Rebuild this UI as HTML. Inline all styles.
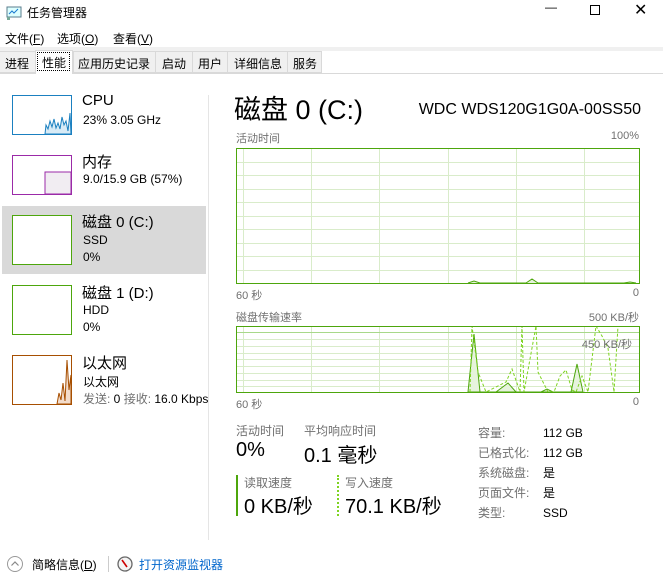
<!DOCTYPE html>
<html><head><meta charset="utf-8"><style>
*{margin:0;padding:0;box-sizing:border-box}
body{width:663px;height:588px;background:#fff;font-family:"Liberation Sans","Noto Sans CJK SC",sans-serif;position:relative;overflow:hidden;color:#000}
.a{position:absolute;white-space:nowrap}
.g{color:#707070}
</style></head><body>
<svg class="a" style="left:6px;top:6px" width="16" height="14"><rect x="1" y="1" width="14" height="10" fill="#dff" stroke="#5a7c8c"/><polyline points="3,8 6,5 8,7 12,3" fill="none" stroke="#1a7ad0"/><rect x="1" y="11" width="3" height="3" fill="#7a9"/></svg>
<div class="a" style="left:27px;top:4px;font-size:12px">任务管理器</div>
<div class="a" style="left:545px;top:0px;font-size:12px">&#8212;</div>
<div class="a" style="left:590px;top:5px;width:10px;height:10px;border:1px solid #000"></div>
<div class="a" style="left:634px;top:0px;font-size:16px;font-weight:300">✕</div>
<div class="a" style="left:5px;top:30px;font-size:12px">文件(<u>F</u>)</div>
<div class="a" style="left:57px;top:30px;font-size:12px">选项(<u>O</u>)</div>
<div class="a" style="left:113px;top:30px;font-size:12px">查看(<u>V</u>)</div>
<div class="a" style="left:0;top:47px;width:663px;height:4px;background:#f0f0f0"></div>
<div class="a" style="left:0;top:51px;width:322px;height:22px;background:#f0f0f0;border:1px solid #d9d9d9;border-left:0"></div>
<div class="a" style="left:0;top:73px;width:663px;height:1px;background:#d9d9d9"></div>
<div class="a" style="left:5px;top:55px;font-size:12px">进程</div>
<div class="a" style="left:35px;top:50px;width:38px;height:24px;background:#fff;border:1px solid #d9d9d9;border-bottom:0"></div>
<div class="a" style="left:37px;top:52px;width:33px;height:19px;border:1px dotted #000"></div>
<div class="a" style="left:42px;top:54px;font-size:12px">性能</div>
<div class="a" style="left:73px;top:51px;width:1px;height:22px;background:#d9d9d9"></div>
<div class="a" style="left:78px;top:55px;font-size:12px">应用历史记录</div>
<div class="a" style="left:155px;top:51px;width:1px;height:22px;background:#d9d9d9"></div>
<div class="a" style="left:162px;top:55px;font-size:12px">启动</div>
<div class="a" style="left:192px;top:51px;width:1px;height:22px;background:#d9d9d9"></div>
<div class="a" style="left:198px;top:55px;font-size:12px">用户</div>
<div class="a" style="left:227px;top:51px;width:1px;height:22px;background:#d9d9d9"></div>
<div class="a" style="left:234px;top:55px;font-size:12px">详细信息</div>
<div class="a" style="left:287px;top:51px;width:1px;height:22px;background:#d9d9d9"></div>
<div class="a" style="left:293px;top:55px;font-size:12px">服务</div>
<div class="a" style="left:208px;top:95px;width:1px;height:445px;background:#e5e5e5"></div>
<div class="a" style="left:2px;top:206px;width:204px;height:68px;background:#d9d9d9"></div>
<svg class="a" style="left:12px;top:95px" width="60" height="40"><rect x="0.5" y="0.5" width="59" height="39" fill="#fff" stroke="#1b80c0"/><polygon points="33,39 34,30 36,34 38,26 40,32 42,24 44,33 46,28 48,34 50,22 52,30 54,26 56,36 58,18 59,39" fill="#d8ebf6" stroke="#1b80c0" stroke-width="1"/></svg>
<div class="a" style="left:82px;top:92px;font-size:15px">CPU</div>
<div class="a" style="left:83px;top:113px;font-size:12px">23% 3.05 GHz</div>
<svg class="a" style="left:12px;top:155px" width="60" height="40"><rect x="0.5" y="0.5" width="59" height="39" fill="#fff" stroke="#9b2aa8"/><rect x="33" y="17" width="26" height="22" fill="#f1edf2" stroke="#9b2aa8"/></svg>
<div class="a" style="left:82px;top:151px;font-size:15px">内存</div>
<div class="a" style="left:83px;top:172px;font-size:12px">9.0/15.9 GB (57%)</div>
<div class="a" style="left:12px;top:215px;width:60px;height:50px;background:#fff;border:1px solid #4da60c"></div>
<div class="a" style="left:82px;top:211px;font-size:15px">磁盘 0 (C:)</div>
<div class="a" style="left:83px;top:233px;font-size:12px">SSD</div>
<div class="a" style="left:83px;top:250px;font-size:12px">0%</div>
<div class="a" style="left:12px;top:285px;width:60px;height:50px;background:#fff;border:1px solid #4da60c"></div>
<div class="a" style="left:82px;top:282px;font-size:15px">磁盘 1 (D:)</div>
<div class="a" style="left:83px;top:303px;font-size:12px">HDD</div>
<div class="a" style="left:83px;top:320px;font-size:12px">0%</div>
<svg class="a" style="left:12px;top:355px" width="60" height="50"><rect x="0.5" y="0.5" width="59" height="49" fill="#fff" stroke="#a74f01"/><polygon points="45,49 47,38 49,45 51,28 53,46 55,5 57,35 59,20 59,49" fill="#f3dccb" stroke="#a74f01"/></svg>
<div class="a" style="left:82px;top:352px;font-size:15px">以太网</div>
<div class="a" style="left:83px;top:373px;font-size:12px">以太网</div>
<div class="a" style="left:83px;top:390px;font-size:12px;width:125px;overflow:hidden"><span class="g">发送:</span> 0 <span class="g">接收:</span> 16.0 Kbps</div>
<div class="a" style="left:234px;top:88px;font-size:27px">磁盘 0 (C:)</div>
<div class="a" style="right:22px;top:101px;font-size:16px">WDC WDS120G1G0A-00SS50</div>
<div class="a g" style="left:236px;top:130px;font-size:11px">活动时间</div>
<div class="a g" style="right:24px;top:130px;font-size:11px">100%</div>
<svg class="a" style="left:236px;top:148px" width="404" height="136">
<g stroke="#d9ecca" stroke-width="1">
<line x1="7.5" y1="0" x2="7.5" y2="136"/><line x1="75.5" y1="0" x2="75.5" y2="136"/><line x1="143.5" y1="0" x2="143.5" y2="136"/><line x1="212.5" y1="0" x2="212.5" y2="136"/><line x1="280.5" y1="0" x2="280.5" y2="136"/><line x1="348.5" y1="0" x2="348.5" y2="136"/>
<line x1="0" y1="14.5" x2="404" y2="14.5"/><line x1="0" y1="27.5" x2="404" y2="27.5"/><line x1="0" y1="41.5" x2="404" y2="41.5"/><line x1="0" y1="54.5" x2="404" y2="54.5"/><line x1="0" y1="68.5" x2="404" y2="68.5"/><line x1="0" y1="81.5" x2="404" y2="81.5"/><line x1="0" y1="95.5" x2="404" y2="95.5"/><line x1="0" y1="108.5" x2="404" y2="108.5"/><line x1="0" y1="122.5" x2="404" y2="122.5"/>
</g>
<polyline points="232,135 238,133 244,135 290,135 296,131 302,135 388,135 394,134 400,135" fill="#e6f3dc" stroke="#4da60c"/>
<rect x="0.5" y="0.5" width="403" height="135" fill="none" stroke="#4da60c"/>
</svg>
<div class="a g" style="left:236px;top:287px;font-size:11px">60 秒</div>
<div class="a g" style="right:24px;top:287px;font-size:11px">0</div>
<div class="a g" style="left:236px;top:309px;font-size:11px">磁盘传输速率</div>
<div class="a g" style="right:24px;top:309px;font-size:11px">500 KB/秒</div>
<svg class="a" style="left:236px;top:326px" width="404" height="67">
<g stroke="#d9ecca" stroke-width="1">
<line x1="7.5" y1="0" x2="7.5" y2="67"/><line x1="75.5" y1="0" x2="75.5" y2="67"/><line x1="143.5" y1="0" x2="143.5" y2="67"/><line x1="212.5" y1="0" x2="212.5" y2="67"/><line x1="280.5" y1="0" x2="280.5" y2="67"/><line x1="348.5" y1="0" x2="348.5" y2="67"/>
<line x1="0" y1="13.5" x2="404" y2="13.5"/><line x1="0" y1="20.5" x2="404" y2="20.5"/><line x1="0" y1="27.5" x2="404" y2="27.5"/><line x1="0" y1="33.5" x2="404" y2="33.5"/><line x1="0" y1="40.5" x2="404" y2="40.5"/><line x1="0" y1="47.5" x2="404" y2="47.5"/><line x1="0" y1="54.5" x2="404" y2="54.5"/><line x1="0" y1="60.5" x2="404" y2="60.5"/>
</g>
<line x1="0" y1="6.5" x2="404" y2="6.5" stroke="#a8d88a"/>
<polygon points="232,66 238,8 244,66 260,66 272,57 280,66 305,66 311,63 317,66 335,66 341,38 347,66" fill="#e6f3dc" stroke="#4da60c"/>
<polyline points="234,66 236,0 242,46 250,66 270,56 276,43 282,60 284,66 286,0 288,66 300,0 302,46 312,66 318,66 324,50 330,44 336,64 340,66 346,50 352,66 360,0 366,10 372,22 378,66 382,0" fill="none" stroke="#7ed321" stroke-dasharray="3,2"/>
<rect x="0.5" y="0.5" width="403" height="66" fill="none" stroke="#4da60c"/>
</svg>
<div class="a g" style="right:31px;top:336px;font-size:11px">450 KB/秒</div>
<div class="a g" style="left:236px;top:396px;font-size:11px">60 秒</div>
<div class="a g" style="right:24px;top:396px;font-size:11px">0</div>
<div class="a g" style="left:236px;top:422px;font-size:12px">活动时间</div>
<div class="a" style="left:236px;top:439px;font-size:20px">0%</div>
<div class="a g" style="left:304px;top:422px;font-size:12px">平均响应时间</div>
<div class="a" style="left:304px;top:439px;font-size:20px">0.1 毫秒</div>
<div class="a" style="left:236px;top:475px;width:2px;height:41px;background:#4da60c"></div>
<div class="a g" style="left:244px;top:474px;font-size:12px">读取速度</div>
<div class="a" style="left:244px;top:490px;font-size:20px">0 KB/秒</div>
<div class="a" style="left:337px;top:475px;width:0;height:41px;border-left:2px dotted #7ed321"></div>
<div class="a g" style="left:345px;top:474px;font-size:12px">写入速度</div>
<div class="a" style="left:345px;top:490px;font-size:20px">70.1 KB/秒</div>
<div class="a g" style="left:478px;top:423px;font-size:12px;line-height:20px">容量:<br>已格式化:<br>系统磁盘:<br>页面文件:<br>类型:</div>
<div class="a" style="left:543px;top:423px;font-size:12px;line-height:20px">112 GB<br>112 GB<br>是<br>是<br>SSD</div>
<div class="a" style="left:7px;top:556px;width:16px;height:16px;border:1px solid #999;border-radius:50%"></div>
<svg class="a" style="left:7px;top:556px" width="16" height="16"><polyline points="4.5,9.5 8,6 11.5,9.5" fill="none" stroke="#888" stroke-width="1.2"/></svg>
<div class="a" style="left:32px;top:556px;font-size:12px">简略信息(<u>D</u>)</div>
<div class="a" style="left:108px;top:556px;width:1px;height:16px;background:#ccc"></div>
<svg class="a" style="left:117px;top:556px" width="16" height="16"><circle cx="8" cy="8" r="7" fill="#f4f4f4" stroke="#666" stroke-width="1.3"/><line x1="5" y1="4" x2="10" y2="11" stroke="#c00" stroke-width="1.6"/></svg>
<div class="a" style="left:139px;top:556px;font-size:12px;color:#0066cc">打开资源监视器</div>
</body></html>
